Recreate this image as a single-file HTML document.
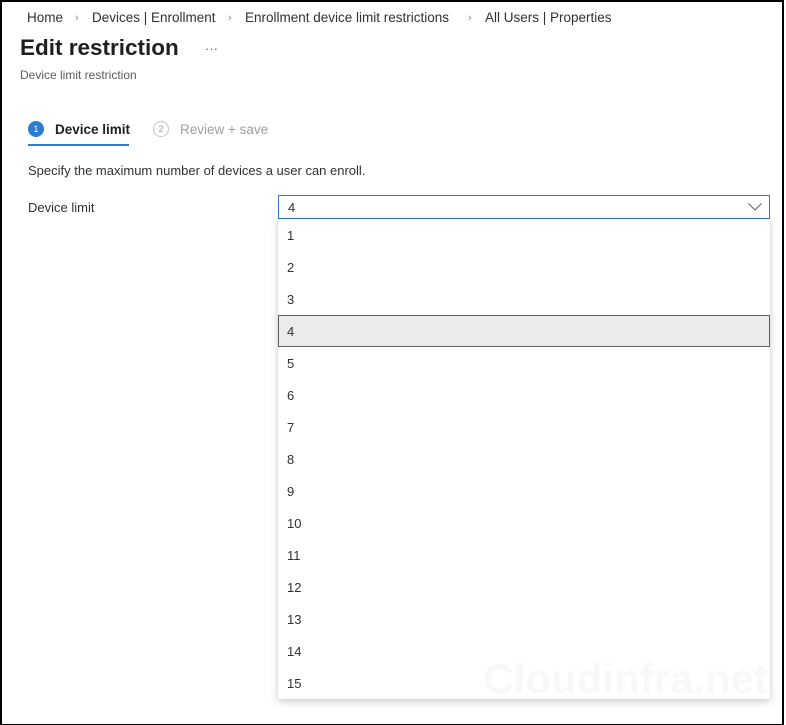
<!DOCTYPE html>
<html><head><meta charset="utf-8"><style>
html,body{margin:0;padding:0;}
body{width:786px;height:725px;overflow:hidden;font-family:"Segoe UI","Liberation Sans",sans-serif;color:#323130;background:#fff;}
.frame{position:absolute;left:0;top:0;width:784px;height:725px;box-sizing:border-box;border:2px solid #000;border-bottom-width:1px;}
.abs{position:absolute;white-space:nowrap;}
.bc{top:10px;font-size:13.5px;color:#323130;}
.sep{color:#8a8886;font-size:11px;top:12px;}
h1{position:absolute;left:20px;top:35px;margin:0;font-size:22.5px;font-weight:600;color:#201f1e;}
.sub{left:20px;top:68px;font-size:12px;color:#605e5c;}
.circ{position:absolute;width:16px;height:16px;border-radius:50%;font-size:9px;text-align:center;line-height:16px;box-sizing:border-box;}
.dd{position:absolute;left:278px;top:195px;width:492px;height:24px;box-sizing:border-box;border:1px solid #2b7cd3;}
.list{position:absolute;left:278px;top:219px;width:492px;height:480px;background:#fff;box-shadow:0 3px 8px rgba(0,0,0,.18),0 0 3px rgba(0,0,0,.08);}
.it{height:32px;line-height:34px;padding-left:9px;font-size:13px;color:#323130;box-sizing:border-box;}
.sel{background:#edebe9;border:1px solid #605e5c;padding-left:8px;line-height:32px;}
.wm{right:18px;top:655px;font-size:42px;font-weight:700;color:#f8f8f8;font-family:"Liberation Sans",sans-serif;}
</style></head><body>
<div class="frame"></div>
<div class="abs bc" style="left:27px">Home</div>
<div class="abs sep" style="left:75px">›</div>
<div class="abs bc" style="left:92px">Devices | Enrollment</div>
<div class="abs sep" style="left:228px">›</div>
<div class="abs bc" style="left:245px">Enrollment device limit restrictions</div>
<div class="abs sep" style="left:468px">›</div>
<div class="abs bc" style="left:485px">All Users | Properties</div>
<h1>Edit restriction</h1>
<div class="abs" style="left:205px;top:41px;font-size:13px;color:#605e5c">···</div>
<div class="abs sub">Device limit restriction</div>
<div class="circ" style="left:28px;top:121px;background:#2b7cd3;color:#fff;">1</div>
<div class="abs" style="left:55px;top:122px;font-size:13.5px;font-weight:600;color:#201f1e">Device limit</div>
<div class="abs" style="left:28px;top:144px;width:101px;height:2px;background:#2b7cd3"></div>
<div class="circ" style="left:153px;top:121px;border:1px solid #c8c6c4;color:#a19f9d;line-height:14px">2</div>
<div class="abs" style="left:180px;top:122px;font-size:13.5px;color:#a19f9d">Review + save</div>
<div class="abs" style="left:28px;top:163px;font-size:13px">Specify the maximum number of devices a user can enroll.</div>
<div class="abs" style="left:28px;top:200px;font-size:13px">Device limit</div>
<div class="dd"><span class="abs" style="left:9px;top:4px;font-size:13px">4</span>
<svg class="abs" style="right:7px;top:7px" width="14" height="8" viewBox="0 0 14 8"><path d="M0.5 0.5 L7 7 L13.5 0.5" fill="none" stroke="#605e5c" stroke-width="1"/></svg></div>
<div class="list">
<div class="it">1</div><div class="it">2</div><div class="it">3</div><div class="it sel">4</div><div class="it">5</div><div class="it">6</div><div class="it">7</div><div class="it">8</div><div class="it">9</div><div class="it">10</div><div class="it">11</div><div class="it">12</div><div class="it">13</div><div class="it">14</div><div class="it">15</div>
</div>
<div class="abs wm">Cloudinfra.net</div>
</body></html>
